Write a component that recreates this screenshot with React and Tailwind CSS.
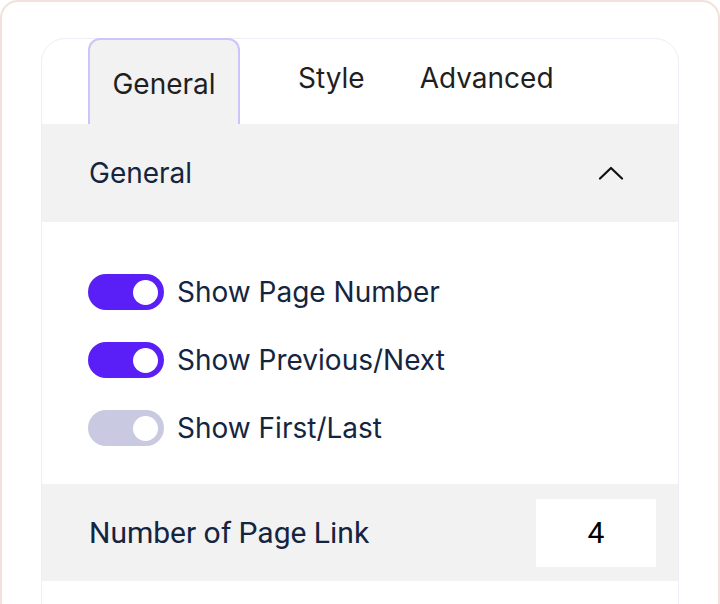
import React, { useState } from 'react';

const Toggle = ({ on }) => (
  <span
    className={`flex items-center justify-end w-[76px] h-[36px] rounded-full pr-[6px] ${
      on ? 'bg-[#5a1ff6]' : 'bg-[#c9c9e1]'
    }`}
  >
    <span className="w-[25px] h-[25px] rounded-full bg-white" />
  </span>
);

const options = [
  { label: 'Show Page Number', on: true },
  { label: 'Show Previous/Next', on: true },
  { label: 'Show First/Last', on: false },
];

export default function App() {
  const [tab] = useState('General');

  return (
    <div className="w-[720px] h-[604px] overflow-hidden bg-white">
      <div className="h-[620px] rounded-[18px] border-2 border-[#f3e2da] bg-white pt-[36px] px-[39px] font-['Inter','Noto_Sans',sans-serif]">
        <div className="h-full rounded-t-[24px] border border-[#eceff6] bg-white">
          {/* Tabs */}
          <div className="flex items-start pl-[46px] h-[85px]">
            <div className="w-[152px] h-[86px] -mt-px rounded-t-[12px] border-2 border-b-0 border-[#cdc4fa] bg-[#f2f2f2] flex justify-center pt-[28px]">
              <span className="text-[28px] leading-[32px] text-[#1f1f1f]">{tab}</span>
            </div>
            <span className="ml-[58px] mt-[23px] text-[28px] leading-[32px] text-[#1f1f1f]">Style</span>
            <span className="ml-[55px] mt-[23px] text-[28px] leading-[32px] text-[#1f1f1f]">Advanced</span>
          </div>

          {/* Section header */}
          <div className="h-[98px] bg-[#f2f2f2] flex items-center justify-between pl-[47px] pr-[54px]">
            <span className="text-[28px] text-[#15253f]">General</span>
            <svg width="26" height="14" viewBox="0 0 26 14" fill="none">
              <path d="M2 12.5 L13 2 L24 12.5" stroke="#111" strokeWidth="2.2" strokeLinecap="round" strokeLinejoin="round" />
            </svg>
          </div>

          {/* Toggles */}
          <div className="flex flex-col gap-[32px] pl-[46px] pt-[52px] pb-[38px]">
            {options.map((o) => (
              <div key={o.label} className="flex items-center gap-[13px]">
                <Toggle on={o.on} />
                <span className="text-[28px] leading-[36px] text-[#15253f]">{o.label}</span>
              </div>
            ))}
          </div>

          {/* Number of page link */}
          <div className="h-[97px] bg-[#f2f2f2] flex items-center justify-between pl-[47px] pr-[22px]">
            <span className="font-['Roboto',sans-serif] text-[30px] text-[#15253f]">Number of Page Link</span>
            <div className="w-[120px] h-[68px] bg-white flex items-center justify-center font-['Roboto',sans-serif] text-[30px] text-black">
              4
            </div>
          </div>
        </div>
      </div>
    </div>
  );
}
